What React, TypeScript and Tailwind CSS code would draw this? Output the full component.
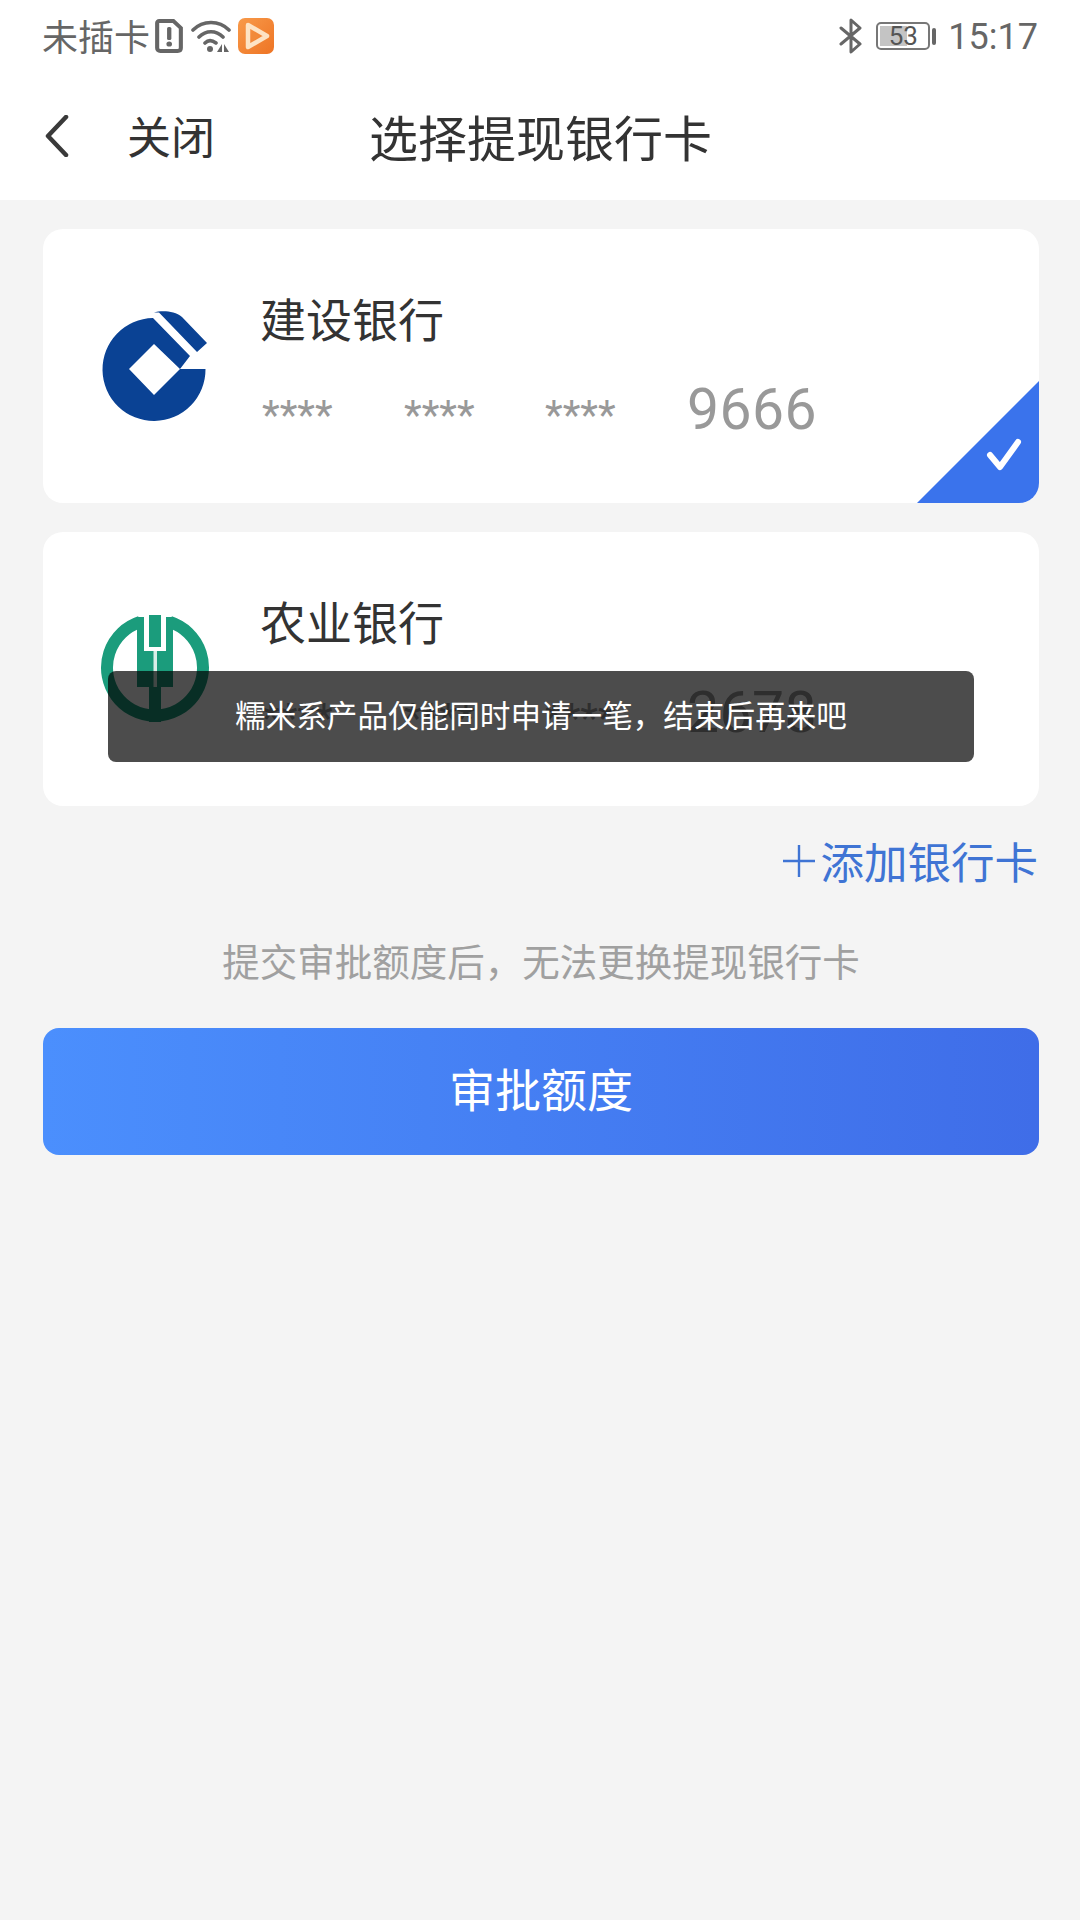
import React from "react";

const CJK = "font-['Noto_Sans_CJK_SC','Noto_Sans',sans-serif]";

function CcbLogo() {
  return (
    <svg width="110" height="115" viewBox="0 0 110 115">
      <path fillRule="evenodd" fill="#0a4294" d="M105.5 60 A51.5 51.5 0 1 1 53 9 L90 47 L80 60 Z M54 35 L29 60 L54 86 L80 60 Z" />
      <path fill="#0a4294" d="M54 3.5 C60 1.5 74 1 82 8 L107 34 L97 43 L59 3.5 Z" />
    </svg>
  );
}

function AbcLogo() {
  return (
    <svg width="110" height="110" viewBox="0 0 110 110">
      <path d="M40 8 A48 48 0 1 0 70 8" fill="none" stroke="#1b9c7c" strokeWidth="12" />
      <path fill="#1b9c7c" d="M37 3 H44 V36 H66 V3 H73 V73 H61 V108 H49 V73 H37 Z" />
      <rect x="49" y="1" width="12" height="35" fill="#1b9c7c" />
      <rect x="44" y="1" width="5" height="35" fill="#fff" />
      <rect x="61" y="1" width="5" height="35" fill="#fff" />
      <rect x="44" y="33" width="22" height="4" fill="#fff" />
      <rect x="53.5" y="37" width="3.5" height="36" fill="#d9eee8" />
    </svg>
  );
}

function Card({ name, last, logo, checked }: { name: string; last: string; logo: React.ReactNode; checked?: boolean }) {
  return (
    <div className="relative flex h-[274px] items-center overflow-hidden rounded-[20px] bg-white pl-[56px]">
      <div className="flex w-[112px] shrink-0 justify-center">{logo}</div>
      <div className="ml-[49px] flex flex-col pb-[6px]">
        <div className={`${CJK} text-[46px] leading-[64px] text-[#333333]`}>{name}</div>
        <div className="mt-[28px] flex h-[64px] items-center font-['Roboto',sans-serif] text-[#999999]">
          <span className="w-[142px] pl-[2px] pt-[13px] text-[41px] leading-none">****</span>
          <span className="w-[141px] pl-[2px] pt-[13px] text-[41px] leading-none">****</span>
          <span className="w-[142px] pl-[2px] pt-[13px] text-[41px] leading-none">****</span>
          <span className="pl-[2px] text-[57px] leading-none tracking-[0.5px]">{last}</span>
        </div>
      </div>
      {checked && (
        <svg className="absolute bottom-0 right-0" width="122" height="122" viewBox="0 0 122 122">
          <path d="M122 0 V122 H0 Z" fill="#3a73ec" />
          <path d="M73 74 L83 86 L101 61" fill="none" stroke="#fff" strokeWidth="6" strokeLinecap="round" strokeLinejoin="round" />
        </svg>
      )}
    </div>
  );
}

export default function App() {
  return (
    <div className={`${CJK} flex h-[1920px] w-[1080px] flex-col bg-[#f4f4f4]`}>
      <div className="bg-white">
        <div className="flex h-[72px] items-center justify-between pl-[42px] pr-[42px] text-[#666666]">
          <div className="flex items-center">
            <span className="-translate-y-[1px] text-[36px] leading-none">未插卡</span>
            <svg className="ml-[5px]" width="28" height="34" viewBox="0 0 26 34" preserveAspectRatio="none">
              <path d="M4 2 H17 L24 9 V29 Q24 32 21 32 H5 Q2 32 2 29 V4 Q2 2 4 2 Z" fill="none" stroke="#666" strokeWidth="3.8" />
              <rect x="11.2" y="8" width="4" height="13" rx="1.5" fill="#666" />
              <circle cx="13.2" cy="25" r="2.6" fill="#666" />
            </svg>
            <svg className="ml-[8px]" width="40" height="34" viewBox="0 0 40 34">
              <path d="M2 11 C12 1 28 1 38 11 M8 18 C15 11 25 11 32 18 M14 24 C17 21 21 21 25 24" fill="none" stroke="#666" strokeWidth="3.6" strokeLinecap="round" />
              <circle cx="19" cy="30" r="3" fill="#666" />
              <path d="M31 25 V33 H26 Z M33 25 L38 33 H33 Z" fill="#666" />
            </svg>
            <svg className="ml-[7px]" width="36" height="36" viewBox="0 0 36 36">
              <defs>
                <linearGradient id="vid" x1="0" y1="0" x2="1" y2="1">
                  <stop offset="0" stopColor="#f89a4a" />
                  <stop offset="1" stopColor="#ee7424" />
                </linearGradient>
              </defs>
              <rect width="36" height="36" rx="7" fill="url(#vid)" />
              <path d="M10 7 L29 18 L10 29 Z" fill="none" stroke="#fde3c4" strokeWidth="4.5" strokeLinejoin="round" />
              <path d="M14 14 L22 18 L14 23 Z" fill="#f18a3a" />
            </svg>
          </div>
          <div className="flex items-center">
            <svg width="24" height="36" viewBox="0 0 24 36">
              <path d="M2 10 L21 26 L12 34 V2 L21 10 L2 26" fill="none" stroke="#666" strokeWidth="3" strokeLinejoin="round" strokeLinecap="round" />
            </svg>
            <div className="relative ml-[13px] flex h-[28px] w-[54px] items-center justify-center rounded-[5px] border-2 border-[#777777]">
              <div className="absolute bottom-[2px] left-[2px] top-[2px] w-[27px] bg-[#c4c4c4]" />
              <span className="relative font-['Roboto',sans-serif] text-[26px] leading-none text-[#555555]">53</span>
            </div>
            <div className="ml-[2px] h-[17px] w-[4px] rounded-sm bg-[#666666]" />
            <span className="ml-[12px] translate-y-[1px] font-['Roboto',sans-serif] text-[36px] leading-none text-[#666666]">15:17</span>
          </div>
        </div>
        <div className="relative flex h-[128px] items-center pl-[45px]">
          <svg width="24" height="42" viewBox="0 0 24 42">
            <path d="M21 2 L3 21 L21 40" fill="none" stroke="#3a3a3a" strokeWidth="4.5" strokeLinecap="round" strokeLinejoin="round" />
          </svg>
          <span className="ml-[58px] -translate-y-[1px] text-[44px] leading-none text-[#333333]">关闭</span>
          <span className="ml-[154px] -translate-y-[1px] text-[49px] leading-none text-[#333333]">选择提现银行卡</span>
        </div>
      </div>

      <div className="flex flex-col pl-[43px] pr-[41px] pt-[29px]">
        <Card name="建设银行" last="9666" logo={<CcbLogo />} checked />
        <div className="relative mt-[29px]">
          <Card name="农业银行" last="2678" logo={<AbcLogo />} />
          <div className="absolute left-[65px] top-[139px] flex h-[91px] w-[866px] items-center justify-center rounded-[8px] bg-black/70 pb-[4px] text-[30.6px] leading-none text-white">
            糯米系产品仅能同时申请一笔，结束后再来吧
          </div>
        </div>
        <div className="mt-[27px] flex items-center justify-end pr-[1px] text-[#3f74d4]">
          <svg width="32" height="32" viewBox="0 0 32 32">
            <path d="M16 0 V32 M0 16 H32" stroke="#3f74d4" strokeWidth="2.4" />
          </svg>
          <span className="ml-[6px] text-[43.5px] leading-[56px]">添加银行卡</span>
        </div>
        <div className="mt-[45px] text-center text-[37.5px] leading-[52px] text-[#a0a0a0]">提交审批额度后，无法更换提现银行卡</div>
        <div className="mt-[42px] flex h-[127px] items-center justify-center rounded-[16px] bg-gradient-to-r from-[#4b8ffd] to-[#3f6de8] pb-[10px] text-[46px] leading-none text-white">
          审批额度
        </div>
      </div>
    </div>
  );
}
